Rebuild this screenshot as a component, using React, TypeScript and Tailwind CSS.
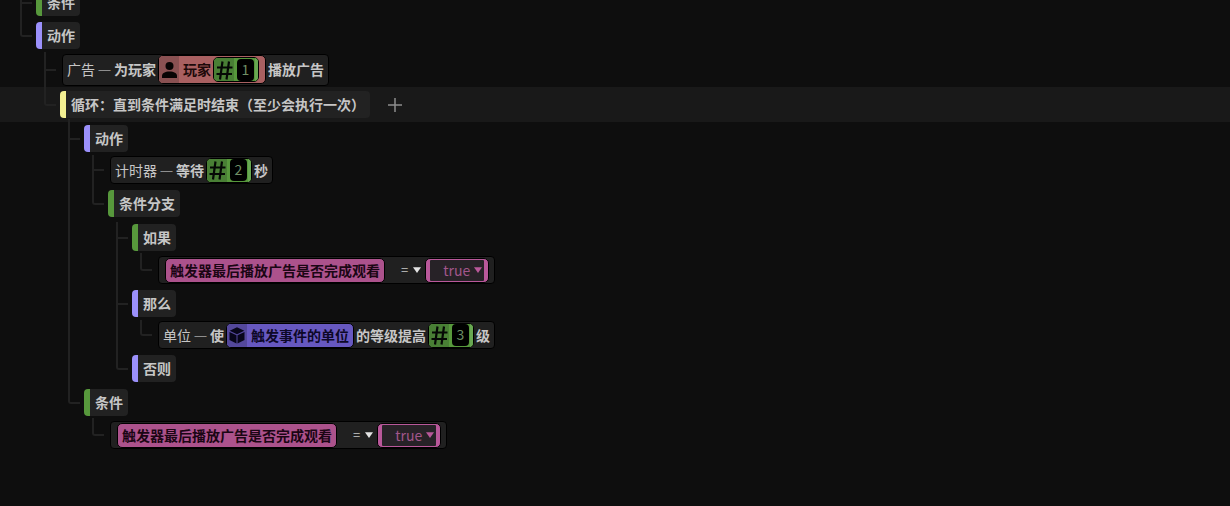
import React from 'react'
import { clsx } from 'clsx'

type Line = 'none' | 'pass' | 'tee' | 'end'
type Tone = 'green' | 'violet' | 'yellow'

const toneClass: Record<Tone, string> = {
  green: 'border-[#57983c]',
  violet: 'border-[#9b90fb]',
  yellow: 'border-[#f2ef92]',
}

// One step of the tree gutter, the last step of a row is narrower
function Guide({ line, last, wide, raised }: { line: Line; last: boolean; wide?: boolean; raised?: boolean }) {
  const width = last ? (wide ? 'w-[18px]' : 'w-[16px]') : 'w-6'
  const color = 'border-[#222222]'
  return (
    <div className={clsx('flex flex-col shrink-0', width, raised && '-mt-[3px]')}>
      <div
        className={clsx(
          raised ? 'h-[calc(50%+3px)]' : 'h-[calc(50%+1px)]',
          color,
          line === 'pass' && 'border-l-2',
          line === 'tee' && 'border-l-2 flex flex-col justify-end',
          line === 'end' && 'border-l-2 border-b-2 rounded-bl-[3px] w-[12px]'
        )}
      >
        {line === 'tee' && <div className={clsx('h-0 w-[10px] border-b-2', color)} />}
      </div>
      <div className={clsx('flex-1', color, (line === 'pass' || line === 'tee') && 'border-l-2')} />
    </div>
  )
}

interface RowProps {
  height: string
  lines: Line[]
  block?: boolean
  active?: boolean
  raised?: boolean
  children: React.ReactNode
}

function Row({ height, lines, block, active, raised, children }: RowProps) {
  return (
    <div className={clsx('flex shrink-0 pl-[20px]', height, active && 'bg-[#191919]')}>
      {lines.map((line, i) => (
        <Guide key={i} line={line} last={i === lines.length - 1} wide={block} raised={raised && i === lines.length - 1} />
      ))}
      <div className="flex items-center">{children}</div>
    </div>
  )
}

function Tag({ tone, children }: { tone: Tone; children: React.ReactNode }) {
  return (
    <div className={clsx('h-[27px] rounded-[4px] border-l-[6px] bg-[#222222] pl-[5px] pr-[5px] font-bold leading-[26px] whitespace-nowrap', toneClass[tone])}>
      {children}
    </div>
  )
}

function Block({ className, children }: { className?: string; children: React.ReactNode }) {
  return (
    <div className={clsx('flex items-center rounded-[4px] border border-black bg-[#202020] whitespace-nowrap', className)}>
      {children}
    </div>
  )
}

function Category({ children }: { children: React.ReactNode }) {
  return (
    <>
      <span>{children}</span>
      <span className="flex w-[19px] justify-center pt-px font-['Noto_Sans'] text-[13px] text-[#8e8e8e]">—</span>
    </>
  )
}

function NumberPill({ value }: { value: number }) {
  return (
    <div className="flex h-[25px] w-[46px] items-center overflow-hidden rounded-[5px] border border-black bg-[#57983c]">
      <div className="flex h-full w-[20px] items-center justify-center bg-[#497f35]">
        <svg width="17" height="20" viewBox="0 0 17 20" fill="none" stroke="#050805" strokeWidth="2.200">
          <path d="M6.500 1.500 4 19.500M13 1.500 10.500 19.500M1 7.500h15.500M.5 14h15.500" />
        </svg>
      </div>
      <div className="ml-[3px] flex h-[22px] w-[17px] items-center justify-center rounded-[4px] bg-black pb-[2px] leading-none text-[#6f8f65]">
        {value}
      </div>
      <div className="ml-auto h-full w-[3px] bg-[#68a852]" />
    </div>
  )
}

function Caret({ className }: { className?: string }) {
  return (
    <svg className={className} width="8" height="6" viewBox="0 0 8 6" fill="currentColor">
      <path d="M0 .3h8L4 6z" />
    </svg>
  )
}

function Compare() {
  return (
    <Block className="h-[28px] w-[337px] pl-[6px]">
      <div className="h-[25px] w-[220px] rounded-[5px] border border-black bg-[#ac528c] pl-[4px] font-bold leading-[23px] text-[#1b0614]">
        触发器最后播放广告是否完成观看
      </div>
      <span className="ml-[16px] text-[13px]">=</span>
      <Caret className="ml-[5px] text-[#e4e4e4]" />
      <div className="ml-[4px] flex h-[25px] w-[64px] items-center rounded-[5px] border border-black bg-[#b9589a] py-px pr-[4px] pl-[4px]">
        <div className="flex h-full flex-1 items-center rounded-[1px] bg-[#272227] pl-[13px] text-[#a2568b]">
          <span className="text-[14px] leading-none">true</span>
          <Caret className="ml-[4px] shrink-0 text-[#b9589a]" />
        </div>
      </div>
    </Block>
  )
}

export default function App() {
  return (
    <div
      className="flex h-[506px] w-full flex-col overflow-hidden bg-[#0e0e0e] text-[14px] text-[#c6c6c6]"
      style={{ fontFamily: '"Noto Sans CJK SC", sans-serif' }}
    >
      <Row height="h-[33px] -mt-[14px]" lines={['tee']}>
        <Tag tone="green">条件</Tag>
      </Row>
      <Row height="h-[33px]" lines={['end']}>
        <Tag tone="violet">动作</Tag>
      </Row>

      <Row height="h-[35px]" lines={['none', 'tee']} block>
        <Block className="h-[32px] px-[4px]">
          <Category>广告</Category>
          <span className="font-bold">为玩家</span>
          <div className="mx-[2px] flex h-[29px] w-[108px] items-center rounded-[5px] border border-black bg-[#a96061]">
            <div className="flex h-full w-[20px] items-center justify-center rounded-l-[4px] bg-[#8a5152]">
              <svg width="15" height="16" viewBox="0 0 15 16" fill="#080404">
                <circle cx="7.500" cy="4" r="4" />
                <path d="M0 16v-2c0-3 3-4.500 7.500-4.500S15 11 15 14v2z" />
              </svg>
            </div>
            <span className="ml-[4px] mr-[2px] font-bold text-[#1c0909]">玩家</span>
            <NumberPill value={1} />
          </div>
          <span className="font-bold">播放广告</span>
        </Block>
      </Row>

      <Row height="h-[35px]" lines={['none', 'end']} active>
        <Tag tone="yellow">循环：直到条件满足时结束（至少会执行一次）</Tag>
        <svg className="ml-[17px]" width="16" height="16" viewBox="0 0 16 16" stroke="#8d8d8d" strokeWidth="1.500">
          <path d="M8 1v14M1 8h14" />
        </svg>
      </Row>

      <Row height="h-[33px]" lines={['none', 'none', 'tee']} raised>
        <Tag tone="violet">动作</Tag>
      </Row>
      <Row height="h-[30px]" lines={['none', 'none', 'pass', 'tee']} block>
        <Block className="h-[28px] px-[4px]">
          <Category>计时器</Category>
          <span className="mr-[2px] font-bold">等待</span>
          <NumberPill value={2} />
          <span className="ml-[2px] font-bold">秒</span>
        </Block>
      </Row>
      <Row height="h-[37px]" lines={['none', 'none', 'pass', 'end']}>
        <Tag tone="green">条件分支</Tag>
      </Row>
      <Row height="h-[31px]" lines={['none', 'none', 'pass', 'none', 'tee']}>
        <Tag tone="green">如果</Tag>
      </Row>
      <Row height="h-[34px]" lines={['none', 'none', 'pass', 'none', 'pass', 'end']} block>
        <Compare />
      </Row>
      <Row height="h-[33px]" lines={['none', 'none', 'pass', 'none', 'tee']}>
        <Tag tone="violet">那么</Tag>
      </Row>
      <Row height="h-[30px]" lines={['none', 'none', 'pass', 'none', 'pass', 'end']} block>
        <Block className="h-[28px] px-[4px]">
          <Category>单位</Category>
          <span className="font-bold">使</span>
          <div className="mx-[2px] flex h-[25px] w-[128px] items-center rounded-[5px] border border-black bg-[#6758c0]">
            <div className="flex h-full w-[20px] items-center justify-center rounded-l-[4px] bg-[#54489b]">
              <svg width="16" height="17" viewBox="0 0 16 17" fill="#08061a">
                <path d="M8 .3 15.300 3.700 8 7.200.7 3.700zM.5 5l7 3.300v8.200L.5 13zM15.500 5l-7 3.300v8.200l7-3.500z" />
              </svg>
            </div>
            <span className="ml-[4px] font-bold text-[#0d0828]">触发事件的单位</span>
          </div>
          <span className="mr-[2px] font-bold">的等级提高</span>
          <NumberPill value={3} />
          <span className="ml-[2px] font-bold">级</span>
        </Block>
      </Row>
      <Row height="h-[37px]" lines={['none', 'none', 'pass', 'none', 'end']}>
        <Tag tone="violet">否则</Tag>
      </Row>
      <Row height="h-[31px]" lines={['none', 'none', 'end']}>
        <Tag tone="green">条件</Tag>
      </Row>
      <Row height="h-[34px]" lines={['none', 'none', 'none', 'end']} block>
        <Compare />
      </Row>
    </div>
  )
}
